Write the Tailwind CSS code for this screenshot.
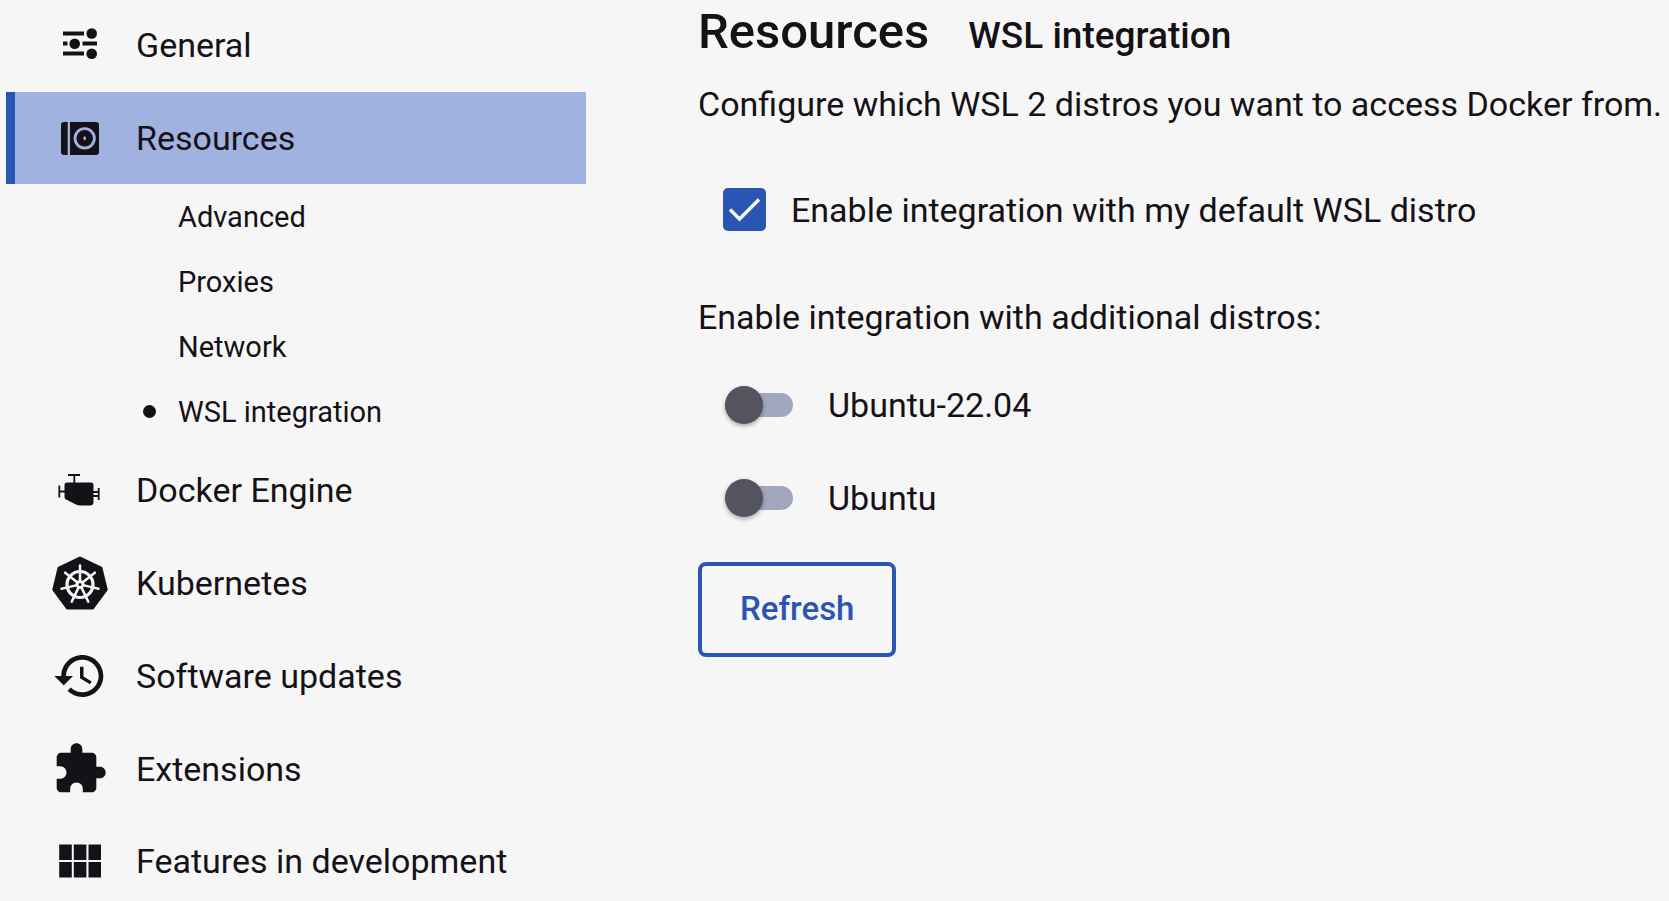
<!DOCTYPE html>
<html lang="en">
<head>
<meta charset="utf-8">
<meta name="viewport" content="width=device-width, initial-scale=1">
<title>Settings – Resources</title>
<script src="https://cdn.jsdelivr.net/npm/@tailwindcss/browser@4"></script>
</head>
<body class="flex min-h-screen overflow-x-hidden bg-[#f6f6f6] font-['Roboto',sans-serif] text-[34px] leading-10 text-[#151217]">
<nav aria-label="Settings" class="w-[586px] shrink-0 pl-[6px]">
  <ul>
    <li>
      <a href="#general" class="flex h-[92px] items-center gap-7 border-l-[9px] border-transparent pb-[2px] pl-[37px]">
        <svg class="size-14 shrink-0" viewBox="0 0 56 56" fill="currentColor" aria-hidden="true">
          <path d="M11 14.500h21v4H11zM11 24.500h4.500v4H11zM30.500 24.500H45v4H30.500zM11 34.500h21v4H11z"/>
          <circle cx="39.700" cy="16.500" r="5.300"/><circle cx="22.700" cy="26.700" r="5.300"/><circle cx="39.700" cy="36.700" r="5.300"/>
        </svg>
        <span>General</span>
      </a>
    </li>
    <li>
      <a href="#resources" aria-current="true" class="flex h-[92px] items-center gap-7 border-l-[9px] border-[#2b55b2] bg-[#a0b3e0] pl-[37px]">
        <svg class="size-14 shrink-0" viewBox="0 0 56 56" fill="currentColor" aria-hidden="true">
          <path d="M15.700 12H12a3 3 0 0 0-3 3v27a3 3 0 0 0 3 3h3.700z"/>
          <path d="M18 12h26a3 3 0 0 1 3 3v27a3 3 0 0 1-3 3H18z"/>
          <circle cx="32.700" cy="28.300" r="9.700" fill="none" stroke="#a0b3e0" stroke-width="2.800"/>
          <ellipse cx="32.700" cy="28.300" rx="1.300" ry="2" fill="#a0b3e0"/>
        </svg>
        <span>Resources</span>
      </a>
      <ul class="pl-[137px] text-[29px] leading-8">
        <li><a href="#advanced" class="flex h-[65px] items-center pl-[35px]">Advanced</a></li>
        <li><a href="#proxies" class="flex h-[65px] items-center pl-[35px]">Proxies</a></li>
        <li><a href="#network" class="flex h-[65px] items-center pl-[35px]">Network</a></li>
        <li><a href="#wsl" aria-current="page" class="flex h-[65px] items-center gap-[22px]"><span class="size-[13px] rounded-full bg-current"></span>WSL integration</a></li>
      </ul>
    </li>
    <li>
      <a href="#engine" class="flex h-[93px] items-center gap-7 border-l-[9px] border-transparent pb-[2px] pl-[37px]">
        <svg class="size-14 shrink-0" viewBox="0 0 56 56" fill="currentColor" aria-hidden="true">
          <path d="M15 20.500h24q2.500 0 2.500 2.500v17q0 3.500-3.500 3.500H28q-2 0-3.500-.8L14 37.500q-1.500-.8-1.500-2.500V23q0-2.500 2.500-2.500z"/>
          <path fill="none" stroke="currentColor" stroke-width="1.800" d="M16 13h12M22.300 13v8M7.300 23.500v12M7.300 29.500h6M46.700 26v12M41 30h5.700M41 34h5.700"/>
        </svg>
        <span>Docker Engine</span>
      </a>
    </li>
    <li>
      <a href="#kubernetes" class="flex h-[93px] items-center gap-7 border-l-[9px] border-transparent pb-[2px] pl-[37px]">
        <svg class="size-14 shrink-0" viewBox="0 0 56 56" fill="currentColor" aria-hidden="true">
          <path stroke="currentColor" stroke-width="3" stroke-linejoin="round" d="M28 3 49 13 54.200 34.500 40.500 53H15.500L1.800 34.500 7 13z"/>
          <g fill="none" stroke="#f6f6f6" stroke-width="2.500" stroke-linecap="round">
            <circle cx="28" cy="29.500" r="13" stroke-width="3.200"/>
            <path id="spoke" d="M28 25.500V10.500"/>
            <use href="#spoke" transform="rotate(51.430 28 29.500)"/>
            <use href="#spoke" transform="rotate(102.860 28 29.500)"/>
            <use href="#spoke" transform="rotate(154.290 28 29.500)"/>
            <use href="#spoke" transform="rotate(205.710 28 29.500)"/>
            <use href="#spoke" transform="rotate(257.140 28 29.500)"/>
            <use href="#spoke" transform="rotate(308.570 28 29.500)"/>
            <circle cx="28" cy="29.500" r="3" stroke-width="3"/>
          </g>
        </svg>
        <span>Kubernetes</span>
      </a>
    </li>
    <li>
      <a href="#updates" class="flex h-[93px] items-center gap-7 border-l-[9px] border-transparent pb-[2px] pl-[37px]">
        <svg class="size-14 shrink-0" viewBox="0 0 24 24" fill="currentColor" aria-hidden="true">
          <path d="M13 3c-4.970 0-9 4.030-9 9H1l3.890 3.890.07.140L9 12H6c0-3.870 3.130-7 7-7s7 3.130 7 7-3.130 7-7 7c-1.930 0-3.680-.79-4.940-2.060l-1.420 1.420C8.270 19.990 10.510 21 13 21c4.970 0 9-4.030 9-9s-4.030-9-9-9zm-1 5v5l4.280 2.540.72-1.210-3.500-2.080V8H12z"/>
        </svg>
        <span>Software updates</span>
      </a>
    </li>
    <li>
      <a href="#extensions" class="flex h-[93px] items-center gap-7 border-l-[9px] border-transparent pb-[2px] pl-[37px]">
        <svg class="size-14 shrink-0" viewBox="0 0 24 24" fill="currentColor" aria-hidden="true">
          <path d="M20.500 11H19V7c0-1.100-.9-2-2-2h-4V3.500C13 2.120 11.880 1 10.500 1S8 2.120 8 3.500V5H4c-1.100 0-1.990.9-1.990 2v3.800H3.500c1.490 0 2.700 1.210 2.700 2.700s-1.210 2.700-2.700 2.700H2V20c0 1.100.9 2 2 2h3.800v-1.500c0-1.490 1.210-2.700 2.700-2.700 1.490 0 2.700 1.210 2.700 2.700V22H17c1.100 0 2-.9 2-2v-4h1.500c1.380 0 2.500-1.120 2.500-2.500S21.880 11 20.500 11z"/>
        </svg>
        <span>Extensions</span>
      </a>
    </li>
    <li>
      <a href="#features" class="flex h-[76px] items-center gap-7 border-l-[9px] border-transparent pt-[14px] pl-[37px]">
        <svg class="size-14 shrink-0" viewBox="0 0 56 56" fill="currentColor" aria-hidden="true">
          <path d="M7.200 11.500h12.600V27H7.200zM21.800 11.500h12.600V27H21.800zM36.500 11.500H49V27H36.500zM7.200 29h12.600v15.500H7.200zM21.800 29h12.600v15.500H21.800zM36.500 29H49v15.500H36.500z"/>
        </svg>
        <span>Features in development</span>
      </a>
    </li>
  </ul>
</nav>
<main class="min-w-0 flex-1 pl-28">
  <header class="flex items-baseline gap-[39px] font-medium">
    <h1 class="text-[49px] leading-[64px]">Resources</h1>
    <h2 class="text-[37px]">WSL integration</h2>
  </header>
  <p class="mt-5 whitespace-nowrap">Configure which WSL 2 distros you want to access Docker from.</p>
  <label class="mt-16 ml-[25px] flex items-center gap-[25px]">
    <span class="grid shrink-0">
      <input type="checkbox" checked class="col-start-1 row-start-1 size-[43px] appearance-none rounded-[5px] border-4 border-[#2b55b2] checked:bg-[#2b55b2]">
      <svg class="pointer-events-none col-start-1 row-start-1 size-[43px]" viewBox="0 0 43 43" fill="none" stroke="#f6f6f6" stroke-width="3.500" aria-hidden="true"><path d="M7 21.500l9.500 9.500L36 11.500"/></svg>
    </span>
    <span>Enable integration with my default WSL distro</span>
  </label>
  <fieldset class="mt-[66px]">
    <legend>Enable integration with additional distros:</legend>
    <div class="flex flex-col items-start gap-[53px] pt-12 pl-[27px]">
      <label class="flex h-10 items-center gap-[35px]">
        <input type="checkbox" role="switch" class="flex h-6 w-[68px] shrink-0 appearance-none items-center rounded-full bg-[#a2a7bd] before:size-[38px] before:shrink-0 before:rounded-full before:bg-[#55535f] before:shadow-[0_2px_4px_#00000055] checked:justify-end checked:before:bg-[#2b55b2]">
        <span>Ubuntu-22.04</span>
      </label>
      <label class="flex h-10 items-center gap-[35px]">
        <input type="checkbox" role="switch" class="flex h-6 w-[68px] shrink-0 appearance-none items-center rounded-full bg-[#a2a7bd] before:size-[38px] before:shrink-0 before:rounded-full before:bg-[#55535f] before:shadow-[0_2px_4px_#00000055] checked:justify-end checked:before:bg-[#2b55b2]">
        <span>Ubuntu</span>
      </label>
    </div>
  </fieldset>
  <button type="button" class="mt-11 flex h-[95px] items-center rounded-lg border-4 border-[#2b55b2] px-[38px] pb-[2px] text-[33px] font-medium text-[#2b55b2]">Refresh</button>
</main>
</body>
</html>
